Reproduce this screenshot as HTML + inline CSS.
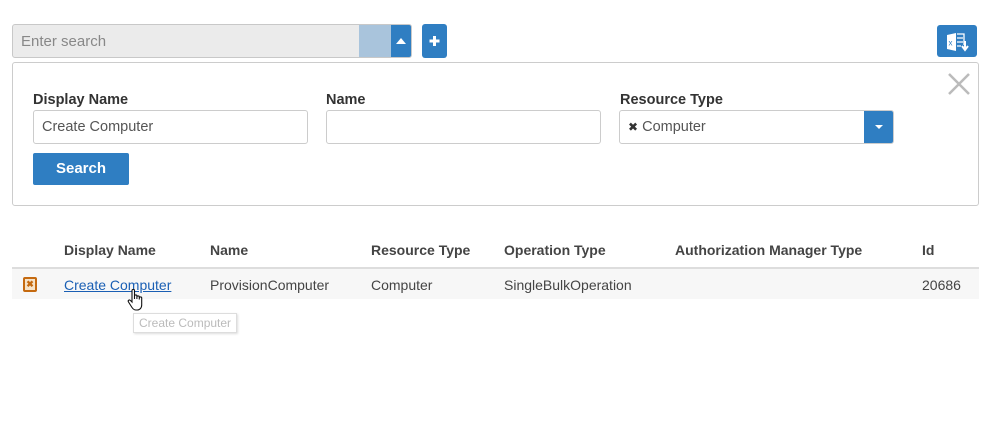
<!DOCTYPE html>
<html><head><style>
body{margin:0;width:990px;height:421px;background:#fff;font-family:"Liberation Sans",sans-serif;font-size:14px;color:#333;position:relative;overflow:hidden}
.a{position:absolute;box-sizing:border-box}
.lbl{font-weight:bold;font-size:14.5px;color:#333}
.inp{border:1px solid #ccc;border-radius:3px;height:34px;background:#fff;padding:0 8px;line-height:33px;color:#555;font-size:14.5px}
.th{font-weight:bold;color:#444;top:242px}
.td{top:277px;color:#444}
</style></head><body>
<div class="a" style="left:12px;top:24px;width:400px;height:34px;border:1px solid #c8c8c8;border-radius:3px;background:#ebebeb;overflow:hidden">
 <div class="a" style="left:8px;top:1px;line-height:32px;color:#888;font-size:15px">Enter search</div>
 <div class="a" style="left:346px;top:0;width:32px;height:32px;background:#a9c4dc"></div>
 <div class="a" style="left:378px;top:0;width:21px;height:32px;background:#2f7ec2"><div class="a" style="left:5px;top:13px;width:0;height:0;border-left:5px solid transparent;border-right:5px solid transparent;border-bottom:6px solid #fff"></div></div>
</div>
<div class="a" style="left:422px;top:24px;width:25px;height:34px;background:#2f7ec2;border-radius:3px"><svg width="25" height="34"><path d="M12.5 12v10M7.5 17h10" stroke="#fff" stroke-width="3"/></svg></div>
<div class="a" style="left:937px;top:25px;width:40px;height:32px;background:#2f7ec2;border-radius:3px">
 <svg width="40" height="32"><path d="M10 10l9-2v18l-9-2z" fill="#fff"/><text x="11.5" y="20.5" font-size="8" fill="#2f7ec2" font-family="Liberation Sans">x</text><path d="M20 9h7v11M20 13h6M20 17h6M20 21h4" stroke="#fff" stroke-width="1.3" fill="none"/><path d="M28 16v8M25 21l3 4 3-4" stroke="#fff" stroke-width="2" fill="none"/></svg>
</div>
<div class="a" style="left:12px;top:62px;width:967px;height:144px;border:1px solid #ccc;border-radius:3px"></div>
<svg class="a" style="left:947px;top:72px" width="24" height="24"><path d="M2 2L22 22M22 2L2 22" stroke="#bbb" stroke-width="2.5"/></svg>
<div class="a lbl" style="left:33px;top:92px">Display Name</div>
<div class="a lbl" style="left:326px;top:92px">Name</div>
<div class="a lbl" style="left:620px;top:92px">Resource Type</div>
<div class="a inp" style="left:33px;top:110px;width:275px">Create Computer</div>
<div class="a inp" style="left:326px;top:110px;width:275px"></div>
<div class="a inp" style="left:619px;top:110px;width:275px;overflow:hidden"><span style="color:#333;font-size:12px">✖</span> Computer
 <div class="a" style="right:-1px;top:-1px;width:30px;height:34px;background:#2f7ec2;border-radius:0 3px 3px 0"><div class="a" style="left:11px;top:15px;border-left:4px solid transparent;border-right:4px solid transparent;border-top:4px solid #fff"></div></div>
</div>
<div class="a" style="left:33px;top:153px;width:96px;height:32px;background:#2f7ec2;border-radius:2px;color:#fff;font-weight:bold;font-size:15px;text-align:center;line-height:31px">Search</div>
<div class="a th" style="left:64px">Display Name</div>
<div class="a th" style="left:210px">Name</div>
<div class="a th" style="left:371px">Resource Type</div>
<div class="a th" style="left:504px">Operation Type</div>
<div class="a th" style="left:675px">Authorization Manager Type</div>
<div class="a th" style="left:922px">Id</div>
<div class="a" style="left:12px;top:267px;width:967px;height:2px;background:#ddd"></div>
<div class="a" style="left:12px;top:269px;width:967px;height:30px;background:#f7f7f7"></div>
<div class="a" style="left:23px;top:277px;width:14px;height:15px;border:2px solid #c56a10;border-radius:2px;background:#f6e3c8;color:#c56a10;font-size:9px;font-weight:bold;text-align:center;line-height:11px">✖</div>
<div class="a td" style="left:64px;color:#1a5fb4;text-decoration:underline">Create Computer</div>
<div class="a td" style="left:210px">ProvisionComputer</div>
<div class="a td" style="left:371px">Computer</div>
<div class="a td" style="left:504px">SingleBulkOperation</div>
<div class="a td" style="left:922px">20686</div>
<div class="a" style="left:133px;top:313px;width:104px;height:20px;border:1px solid #ddd;background:#fff;color:#bbb;font-size:12px;line-height:18px;padding-left:5px;box-shadow:1px 1px 2px #ddd">Create Computer</div>
<svg class="a" style="left:126px;top:288px" width="22" height="24"><path d="M6 2.5c0-1.5 2.5-1.5 2.5 0V11V8c0-1.4 2.4-1.4 2.4 0v3-2c0-1.4 2.4-1.4 2.4 0v2.5-1.5c0-1.4 2.4-1.4 2.4 0V17c0 3-2 5-4.5 5H10c-2 0-3-1-4-2.5L2.5 14c-1-1.5.8-2.8 2-1.5L6 14z" fill="#fff" stroke="#111" stroke-width="1.1"/></svg>
</body></html>
